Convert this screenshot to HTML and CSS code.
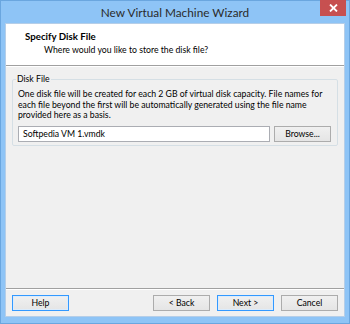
FILE: index.html
```html
<!DOCTYPE html>
<html>
<head>
<meta charset="utf-8">
<link rel="stylesheet" href="styles.css">
</head>
<body>
<div class="window">
  <div class="titlebar">
    <div class="spacer"></div>
    <div class="title">New Virtual Machine Wizard</div>
    <div class="close">
      <svg width="9" height="8" viewBox="0 0 9 8"><path d="M1 0.5 L8 7.5 M8 0.5 L1 7.5" stroke="#fff" stroke-width="1.8"/></svg>
    </div>
  </div>
  <div class="client">
    <div class="header">
      <div class="h-title">Specify Disk File</div>
      <div class="h-sub">Where would you like to store the disk file?</div>
    </div>
    <div class="body">
      <fieldset class="group">
        <legend>Disk File</legend>
        <p class="desc">One disk file will be created for each 2 GB of virtual disk capacity. File names for each file beyond the first will be automatically generated using the file name provided here as a basis.</p>
        <div class="row">
          <div class="input">Softpedia VM 1.vmdk</div>
          <div class="btn">Browse...</div>
        </div>
      </fieldset>
    </div>
    <div class="footer">
      <div class="btn focus">Help</div>
      <div class="grow"></div>
      <div class="btn">&lt; Back</div>
      <div class="btn default">Next &gt;</div>
      <div class="btn">Cancel</div>
    </div>
  </div>
</div>
</body>
</html>
```
FILE: styles.css
```css
* { box-sizing: border-box; }
html, body { margin: 0; padding: 0; }
body { font-family: Lato, "Noto Sans", sans-serif; color: #000; }
.window {
  width: 350px; height: 324px;
  background: #8ec4f6;
  border: 1px solid #6aa6df;
  display: flex; flex-direction: column;
}
.titlebar {
  height: 22px;
  display: grid;
  grid-template-columns: 1fr auto 1fr;
  align-items: start;
}
.title {
  font-size: 11.8px; line-height: 22px; color: #2b2b2b;
  padding-top: 1px;
}
.close {
  justify-self: end;
  width: 26px; height: 16px;
  margin-right: 3px;
  background: #c75050;
  margin-top: -1px;
  display: flex; align-items: center; justify-content: center;
}
.client {
  flex: 1;
  margin: 0 4px 6px 4px;
  background: #f0f0f0;
  border: 1px solid #b5cee8;
  display: flex; flex-direction: column;
}
.header {
  background: #fff;
  height: 42px;
  border-bottom: 1px solid #a0a0a0;
  box-shadow: 0 1px 0 #fff;
  padding: 6px 0 0 19px;
}
.h-title { font-size: 9.7px; font-weight: bold; line-height: 12px; }
.h-sub { font-size: 8.7px; line-height: 12px; padding-left: 19px; margin-top: 2px; }
.body { flex: 1; padding: 7px 6px 0 6px; }
.group {
  margin: 0; border: 1px solid #d5dfe5; border-radius: 2px;
  padding: 4px 5px 5px 5px;
  height: 73px;
}
.group legend { font-size: 8.7px; padding: 0 1px; margin-left: -2px; line-height: 12px; }
.desc { margin: 0; font-size: 8.7px; line-height: 10.5px; }
.row { display: flex; gap: 4px; margin-top: 5px; }
.input {
  width: 252px; height: 16px;
  background: #fff; border: 1px solid #abadb3;
  font-size: 8.7px; line-height: 14px; padding-left: 4px;
}
.btn {
  width: 57px; height: 16px;
  border: 1px solid #acacac;
  background: linear-gradient(#f0f0f0, #e5e5e5);
  font-size: 8.7px; line-height: 14px; text-align: center;
}
.footer {
  height: 28px;
  border-top: 1px solid #a0a0a0;
  box-shadow: inset 0 1px 0 #fff;
  display: flex; align-items: center; gap: 7px;
  padding: 0 6px;
}
.grow { flex: 1; }
.btn.focus, .btn.default { border-color: #3399ff; box-shadow: inset 0 0 0 1px #dcecfc; }
```
